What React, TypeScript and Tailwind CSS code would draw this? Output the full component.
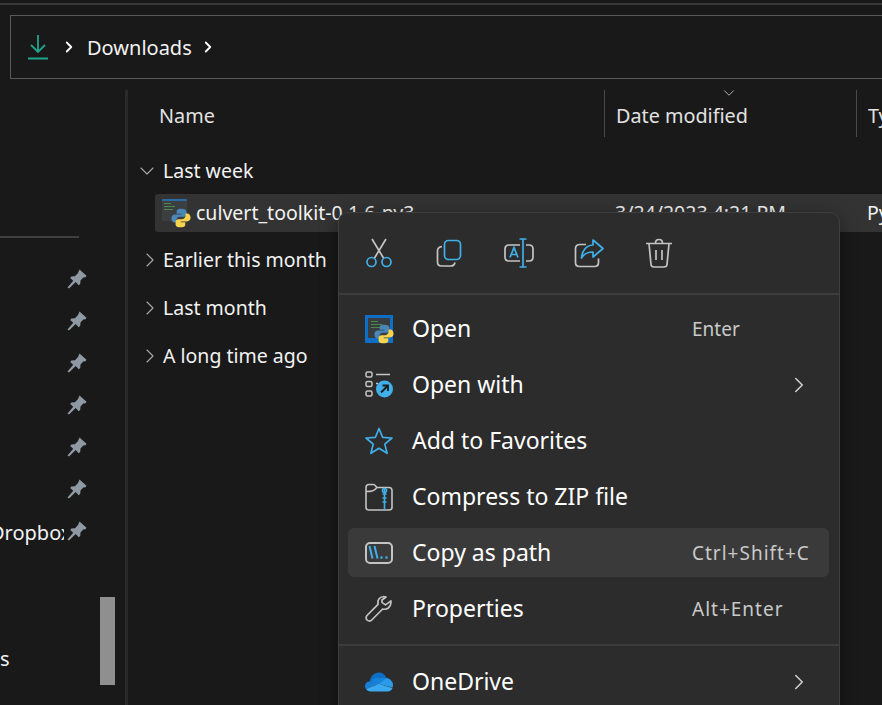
import { ChevronDown, ChevronRight } from "lucide-react";

const FONT = "font-['Noto_Sans',sans-serif]";

function PyBadge({ className }: { className?: string }) {
  return (
    <svg viewBox="0 0 14 14" className={className}>
      <path d="M6.900 .500C4.500 .500 4 1.500 4 2.500V4h3.200v.6H2.800C1.300 4.600 .300 5.600 .300 7.300s1 2.900 2.300 2.900h1.200V8.500c0-1.300 1-2.300 2.300-2.300h2.800c1.100 0 1.900-.9 1.900-1.900V2.500C10.800 1.200 9.500 .500 6.900 .500z" fill="#4a86b8" />
      <path d="M7.100 13.500c2.400 0 2.900-1 2.900-2V10H6.800v-.6h4.400c1.500 0 2.500-1 2.500-2.700s-1-2.900-2.300-2.900h-1.200v1.700c0 1.300-1 2.300-2.300 2.300H5.100c-1.100 0-1.900.9-1.900 1.900v1.800c0 1.300 1.300 2 3.900 2z" fill="#f7d44f" />
    </svg>
  );
}

function PyFile({ blue }: { blue?: boolean }) {
  return (
    <div className="relative h-[28px] w-[28px] shrink-0">
      <div className={blue ? "h-full w-full bg-[#0f6fc6] p-[3px]" : "h-[22px] w-[25px] rounded-[1px] border-t-2 border-[#2a6aa5] bg-[#3c3f42] p-[2px]"}>
        <div className={blue ? "flex h-[20px] flex-col gap-[2px] bg-[#3a3d40] p-[3px]" : "flex flex-col gap-[2px]"}>
          <div className="h-[1px] w-[7px] bg-[#4c8a4c]" />
          <div className="h-[1px] w-[11px] bg-[#4c8a4c]" />
          <div className="h-[1px] w-[9px] bg-[#4c8a4c]" />
        </div>
      </div>
      <PyBadge className="absolute -bottom-[1px] -right-[1px] h-[20px] w-[20px]" />
    </div>
  );
}

function Pin() {
  return (
    <svg viewBox="0 0 20 20" className="h-[20px] w-[20px]">
      <path d="M12.500 .500l7 6.300-1 1.400-2.200.3-2.800 3-.3 3.500-1.500 1.200-3-3.200L2 19.500.5 18.500l5.700-6.700-3-2.800 1.200-1.500 3.600-.2 3-3.400z" fill="#8f99a3" />
    </svg>
  );
}

function Row({ icon, label, hint, arrow, active }: { icon: React.ReactNode; label: string; hint?: string; arrow?: boolean; active?: boolean }) {
  return (
    <div className={`flex h-[49px] items-center rounded-[6px] pl-[17px] pr-[17px] ${active ? "bg-[#3a3a3a]" : ""}`}>
      <div className="flex h-[28px] w-[28px] shrink-0 items-center justify-center">{icon}</div>
      <span className="ml-[19px] flex-1 text-[23px] leading-none text-white">{label}</span>
      {hint && <span className={`w-[120px] whitespace-nowrap pt-[2px] text-[19px] text-[#c9c9c9] ${hint.includes("+") ? "tracking-[1px]" : ""}`}>{hint}</span>}
      {arrow && <ChevronRight className="h-[26px] w-[26px] text-[#d0d0d0]" strokeWidth={1.400} />}
    </div>
  );
}

const gray = "#c4c4c4";
const blue = "#3fb0ea";

export default function App() {
  const groups = ["Earlier this month", "Last month", "A long time ago"];

  return (
    <div className={`relative h-[705px] w-[882px] overflow-hidden bg-[#191919] ${FONT}`}>
      <div className="mt-[3px] h-[2px] bg-[#3a3a3a]" />

      {/* address bar */}
      <div className="ml-[10px] mt-[10px] flex h-[64px] items-center border border-r-0 border-[#5a5a5a] pl-[17px]">
        <svg viewBox="0 0 20 26" className="h-[26px] w-[20px]" fill="none" stroke="#1fa58c" strokeWidth="1.800">
          <path d="M10 1v17M3 11l7 7 7-7M0 24.500h20" />
        </svg>
        <ChevronRight className="ml-[12px] h-[18px] w-[18px] text-white" strokeWidth={2.400} />
        <span className="ml-[9px] pt-[2px] text-[20px] text-[#f2f2f2]">Downloads</span>
        <ChevronRight className="ml-[7px] h-[18px] w-[18px] text-white" strokeWidth={2.400} />
      </div>

      <div className="mt-[11px] flex h-[615px]">
        {/* navigation pane */}
        <div className="relative w-[125px] shrink-0 overflow-hidden">
          <div className="mt-[146px] h-[2px] w-[79px] bg-[#3f3f3f]" />
          <div className="mt-[31px] flex w-[87px] flex-col items-end gap-[22px]">
            {[0, 1, 2, 3, 4, 5, 6].map((i) => (
              <Pin key={i} />
            ))}
          </div>
          <div className="absolute left-[-10px] top-[428px] w-[74px] overflow-hidden whitespace-nowrap text-[20px] text-[#f2f2f2]">Dropbox</div>
          <div className="absolute left-0 top-[554px] text-[20px] text-[#f2f2f2]">s</div>
          <div className="absolute left-[100px] top-[507px] h-[88px] w-[15px] bg-[#8f8f8f]" />
        </div>
        <div className="w-[3px] shrink-0 bg-[#2a2a2a]" />

        {/* file list */}
        <div className="min-w-0 flex-1 overflow-hidden">
          <div className="flex h-[47px] items-center whitespace-nowrap text-[19.800px] text-[#e2e2e2]">
            <span className="ml-[31px] w-[445px] shrink-0 pt-[4px]">Name</span>
            <div className="relative flex h-[47px] w-[252px] shrink-0 items-center border-l border-[#4a4a4a] pl-[11px] pt-[4px]">
              Date modified
              <ChevronDown className="absolute left-[115px] top-[-6px] h-[18px] w-[18px] text-[#bbbbbb]" strokeWidth={1.200} />
            </div>
            <div className="flex h-[47px] shrink-0 items-center border-l border-[#4a4a4a] pl-[11px] pt-[4px]">Type</div>
          </div>

          <div className="ml-[7px] mt-[20px] flex h-[28px] items-center text-[19.500px] text-[#f2f2f2]">
            <ChevronDown className="h-[24px] w-[24px] text-[#a8a8a8]" strokeWidth={1.100} />
            <span className="ml-[-3px] pl-[7px]">Last week</span>
          </div>
          <div className="ml-[27px] mt-[9px] flex h-[38px] items-center whitespace-nowrap rounded-l-[3px] bg-[#333333] pl-[7px] text-[19.500px] text-[#f2f2f2]">
            <PyFile />
            <span className="ml-[6px] w-[419px] shrink-0">culvert_toolkit-0.1.6-py3</span>
            <span className="w-[252px] shrink-0">3/24/2023 4:21 PM</span>
            <span className="shrink-0">Python</span>
          </div>
          <div className="ml-[10px] mt-[14px] flex flex-col gap-[20px]">
            {groups.map((g) => (
              <div key={g} className="flex h-[28px] items-center whitespace-nowrap text-[19.500px] text-[#f2f2f2]">
                <ChevronRight className="h-[24px] w-[24px] text-[#a8a8a8]" strokeWidth={1.100} />
                <span className="ml-[1px]">{g}</span>
              </div>
            ))}
          </div>
        </div>
      </div>

      {/* context menu */}
      <div className="absolute left-[338px] top-[212px] h-[520px] w-[502px] rounded-[10px] border border-[#3e3e3e] bg-[#2c2c2c] shadow-[0_4px_18px_rgba(0,0,0,0.4)]">
        <div className="flex h-[80px] items-center gap-[38px] pl-[24px]">
          <svg viewBox="0 0 32 32" className="h-[32px] w-[32px]" fill="none" strokeWidth="1.700">
            <path d="M9 2l11.500 19M23 2L11.500 21" stroke={gray} />
            <circle cx="8.500" cy="25" r="4.500" stroke={blue} />
            <circle cx="23.500" cy="25" r="4.500" stroke={blue} />
          </svg>
          <svg viewBox="0 0 32 32" className="h-[32px] w-[32px]" fill="none" strokeWidth="1.700">
            <path d="M9 9.500C5.500 10 4.500 12 4.500 14v11c0 2.500 1.500 4 4 4h9c2 0 4-1 4.500-3.500" stroke={gray} />
            <rect x="11.500" y="3.500" width="16" height="19" rx="4" stroke={blue} />
          </svg>
          <svg viewBox="0 0 32 32" className="h-[32px] w-[32px]" fill="none" strokeWidth="1.700">
            <path d="M17 8H6c-2.500 0-4 1.500-4 4v8c0 2.500 1.500 4 4 4h11M23 8h3c2.500 0 4 1.500 4 4v8c0 2.500-1.500 4-4 4h-3" stroke={gray} />
            <path d="M16.500 2h7M20 2v28M16.500 30h7M7 20.500l4-10 4 10M8.300 17.500h5.400" stroke={blue} />
          </svg>
          <svg viewBox="0 0 32 32" className="h-[32px] w-[32px]" fill="none" strokeWidth="1.700">
            <path d="M13 7.500H7c-3 0-4.500 1.500-4.500 4v14c0 2.500 1.500 4 4 4h15c2.500 0 4-1.500 4-4v-4" stroke={gray} />
            <path d="M20 3l10 8.500-10 8.500v-5c-5 0-9 1.500-11.500 6 .5-7 4.500-12.500 11.500-13z" stroke={blue} strokeLinejoin="round" />
          </svg>
          <svg viewBox="0 0 32 32" className="h-[32px] w-[32px]" fill="none" stroke={gray} strokeWidth="1.700">
            <path d="M3 6.500h26M6 6.500l2 21c.2 1.500 1 2.500 3 2.500h10c2 0 2.800-1 3-2.500l2-21M12.500 6c0-2 1.500-3.500 3.500-3.500s3.500 1.500 3.500 3.500M13 13v10M19 13v10" />
          </svg>
        </div>
        <div className="h-[2px] bg-[#3c3c3c]" />

        <div className="flex flex-col gap-[7px] pl-[9px] pr-[10px] pt-[9px]">
          <Row icon={<PyFile blue />} label="Open" hint="Enter" />
          <Row
            label="Open with"
            arrow
            icon={
              <svg viewBox="0 0 28 28" className="h-[28px] w-[28px]" fill="none" strokeWidth="1.500">
                <rect x="1" y="1" width="6" height="5" rx="1.500" stroke={gray} />
                <rect x="1" y="10.500" width="6" height="5" rx="1.500" stroke={gray} />
                <rect x="1" y="20" width="6" height="5" rx="1.500" stroke={gray} />
                <path d="M11 3.500h14M11 12.500h2" stroke={gray} />
                <circle cx="19.500" cy="18" r="8.500" fill={blue} stroke="none" />
                <path d="M16 21.500l6.500-6.500M17.500 14.500h5.500v5.500" stroke="#1c1c1c" strokeWidth="1.800" />
              </svg>
            }
          />
          <Row
            label="Add to Favorites"
            icon={
              <svg viewBox="0 0 28 28" className="h-[28px] w-[28px]" fill="none" stroke={blue} strokeWidth="1.700" strokeLinejoin="round">
                <path d="M14 1.500l3.600 8.800 9.400.7-7.200 6.100 2.300 9.200-8.100-5-8.100 5 2.300-9.200L1 11l9.400-.7z" />
              </svg>
            }
          />
          <Row
            label="Compress to ZIP file"
            icon={
              <svg viewBox="0 0 28 28" className="h-[28px] w-[28px]" fill="none" strokeWidth="1.600">
                <path d="M1 24V4.500C1 2.500 2 1.500 4 1.500h4.500c1.500 0 2 1.500 3.500 3h12c2 0 3 1 3 3v17c0 1.500-1 2.500-3 2.500H4c-2 0-3-1-3-2.500zM1 8.500c5 0 8 0 11-4" stroke={gray} />
                <path d="M19.500 5.500v21M17.500 11h4M17.500 15h4M17.500 19h4" stroke={blue} />
                <circle cx="19.500" cy="7.500" r="2" stroke={blue} />
              </svg>
            }
          />
          <Row
            label="Copy as path"
            hint="Ctrl+Shift+C"
            active
            icon={
              <svg viewBox="0 0 28 22" className="h-[22px] w-[28px]" fill="none" strokeWidth="2">
                <rect x="1" y="1" width="26" height="20" rx="4" stroke={gray} />
                <path d="M4.500 4l3 12.500M9.500 4l3 12.500" stroke={blue} />
                <path d="M15.500 15.500h2M20.500 15.500h2" stroke={blue} strokeWidth="2.400" />
              </svg>
            }
          />
          <Row
            label="Properties"
            hint="Alt+Enter"
            icon={
              <svg viewBox="0 0 28 28" className="h-[28px] w-[28px]" fill="none" stroke={gray} strokeWidth="1.700" strokeLinejoin="round">
                <path d="M19 1.500c-4.200 0-7 3.500-6 7.800L2 20.500c-1.500 1.500-1 3.500 0 4.500s3.300 1.700 4.700 0l11-11c4.300 1 8-1.500 8.300-6.500l-.1-1.600-5.400 4-3.500-2.500V5l4-3c-.8-.4-1.700-.5-2.500-.5z" />
              </svg>
            }
          />
        </div>
        <div className="mt-[11px] h-[2px] bg-[#3c3c3c]" />
        <div className="pl-[9px] pr-[10px] pt-[11px]">
          <Row
            label="OneDrive"
            arrow
            icon={
              <svg viewBox="0 0 28 20" className="h-[20px] w-[28px]">
                <path d="M4.500 10C5.500 4 9.500.500 14 .500c3.500 0 6 2 7.500 5.500L14 13z" fill="#0f6fc6" />
                <path d="M7 8.500c2-2 5-3 7.500-2 3-1.500 7-.5 7.500 1.500l-9 6z" fill="#1583d8" />
                <path d="M21.500 6c3.500.5 6.500 3.500 6.500 7 0 1-.2 1.700-.5 2.500L14 12z" fill="#2a9be8" />
                <path d="M4.500 9.500c-2.500 0-4.500 2-4.500 4.500 0 1.200.4 2.300 1 3l13-5-5-3z" fill="#1a7fd4" />
                <path d="M1 17c1 1.500 2.500 2.500 4.500 2.500h17c2.500 0 4.300-1.500 5-3.500L14 12z" fill="#3ba9f0" />
              </svg>
            }
          />
        </div>
      </div>
    </div>
  );
}
